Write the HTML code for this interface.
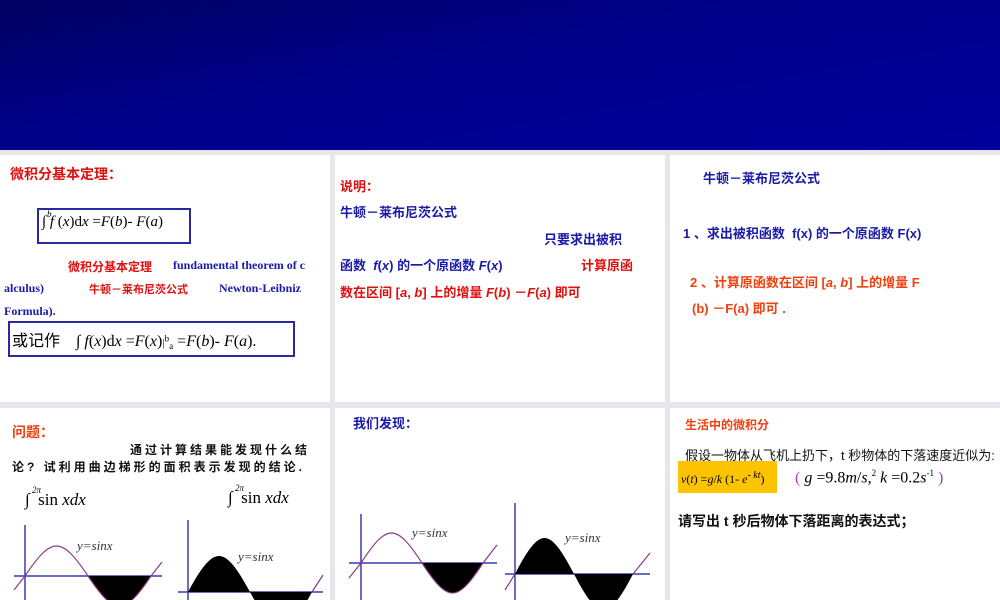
<!DOCTYPE html>
<html><head><meta charset="utf-8"><style>
*{margin:0;padding:0}
body{width:1000px;height:600px;position:relative;overflow:hidden;background:#e6e6ec;font-family:"Liberation Sans","Noto Sans CJK SC",sans-serif}
.hd{position:absolute;left:0;top:0;width:1000px;height:150px;background:linear-gradient(170deg,#000060 0%,#000088 40%,#00009c 100%)}
.p{position:absolute;background:#fff}
.t{position:absolute;white-space:nowrap;font-weight:bold;font-size:13px}
.r{color:#e01010}.b{color:#1a1aa8}.o{color:#f04010}.k{color:#111}
.ser{font-family:"Liberation Serif",serif;font-weight:normal;color:#000}
.box{position:absolute;border:2px solid #2a2aa0;background:#fff}
.lim{position:absolute;font-family:"Liberation Serif",serif;font-style:italic;font-size:9px;color:#000}
</style></head><body>
<div class="hd"></div>
<div class="p" style="left:0;top:155px;width:330px;height:247px"></div>
<div class="p" style="left:335px;top:155px;width:330px;height:247px"></div>
<div class="p" style="left:670px;top:155px;width:330px;height:247px"></div>
<div class="p" style="left:0;top:408px;width:330px;height:192px"></div>
<div class="p" style="left:335px;top:408px;width:330px;height:192px"></div>
<div class="p" style="left:670px;top:408px;width:330px;height:192px"></div>

<!-- panel 1 -->
<div class="t r" style="left:10px;top:164px;font-size:14px">微积分基本定理：</div>
<div class="box" style="left:37px;top:208px;width:150px;height:32px"></div>
<div class="t ser" style="left:42px;top:214px;font-size:15px"><i>∫</i> <i>f</i> (<i>x</i>)d<i>x</i> =<i>F</i>(<i>b</i>)- <i>F</i>(<i>a</i>)</div>
<div class="lim" style="left:47px;top:209px">b</div>
<div class="t r" style="left:68px;top:258px;font-size:12px">微积分基本定理</div>
<div class="t b ser" style="left:173px;top:258px;font-size:12px;color:#1a1aa8;font-weight:bold">fundamental theorem of c</div>
<div class="t b ser" style="left:4px;top:281px;font-size:12px;color:#1a1aa8;font-weight:bold">alculus)</div>
<div class="t r" style="left:89px;top:281px;font-size:11px">牛顿－莱布尼茨公式</div>
<div class="t b ser" style="left:219px;top:281px;font-size:12px;color:#1a1aa8;font-weight:bold">Newton-Leibniz</div>
<div class="t b ser" style="left:4px;top:304px;font-size:12px;color:#1a1aa8;font-weight:bold">Formula).</div>
<div class="box" style="left:8px;top:321px;width:283px;height:32px"></div>
<div class="t ser" style="left:12px;top:327px;font-size:16px">或记作 &nbsp;&nbsp; <i>∫</i> <i>f</i>(<i>x</i>)d<i>x</i> =<i>F</i>(<i>x</i>)<span style="font-size:11px">|<sup>b</sup><sub>a</sub></span> =<i>F</i>(<i>b</i>)- <i>F</i>(<i>a</i>).</div>

<!-- panel 2 -->
<div class="t r" style="left:340px;top:176px;font-size:13px">说明：</div>
<div class="t b" style="left:340px;top:202px">牛顿－莱布尼茨公式</div>
<div class="t b" style="left:544px;top:229px">只要求出被积</div>
<div class="t b" style="left:340px;top:255px">函数 &nbsp;<i>f</i>(<i>x</i>) 的一个原函数 <i>F</i>(<i>x</i>)</div>
<div class="t r" style="left:581px;top:255px">计算原函</div>
<div class="t r" style="left:340px;top:282px">数在区间 [<i>a</i>, <i>b</i>] 上的增量 <i>F</i>(<i>b</i>) －<i>F</i>(<i>a</i>) 即可</div>

<!-- panel 3 -->
<div class="t b" style="left:703px;top:168px">牛顿－莱布尼茨公式</div>
<div class="t b" style="left:683px;top:223px">1 、求出被积函数 &nbsp;f(x) 的一个原函数 F(x)</div>
<div class="t o" style="left:690px;top:272px">2 、计算原函数在区间 [<i>a</i>, <i>b</i>] 上的增量 F</div>
<div class="t o" style="left:692px;top:298px">(b) －F(a) 即可 .</div>

<!-- bottom 1 -->
<div class="t o" style="left:12px;top:422px;font-size:14px">问题：</div>
<div class="t k" style="left:130px;top:441px;font-size:12px;letter-spacing:3px">通过计算结果能发现什么结</div>
<div class="t k" style="left:12px;top:458px;font-size:12px;letter-spacing:3px">论? 试利用曲边梯形的面积表示发现的结论.</div>
<div class="t ser" style="left:25px;top:490px;font-size:17px"><i>∫</i> &nbsp;sin <i>xdx</i></div>
<div class="lim" style="left:32px;top:485px">2π</div>
<div class="t ser" style="left:228px;top:488px;font-size:17px"><i>∫</i> &nbsp;sin <i>xdx</i></div>
<div class="lim" style="left:235px;top:483px">2π</div>

<!-- bottom 2 -->
<div class="t b" style="left:353px;top:413px">我们发现：</div>

<!-- bottom 3 -->
<div class="t o" style="left:685px;top:416px;font-size:12px">生活中的微积分</div>
<div class="t k" style="left:685px;top:445px;font-weight:normal;font-size:13px">假设一物体从飞机上扔下，t 秒物体的下落速度近似为:</div>
<div style="position:absolute;left:678px;top:461px;width:99px;height:32px;background:#fcc400"></div>
<div class="t ser" style="left:681px;top:470px;font-size:12px"><i>v</i>(<i>t</i>) =<i>g</i>/<i>k</i> (1- <i>e</i><sup>- <i>kt</i></sup>)</div>
<div class="t ser" style="left:795px;top:468px;font-size:16px"><span style="color:#a040c0">(</span> <i>g</i> =9.8<i>m</i>/<i>s</i>,<sup style="font-size:9px">2</sup> <i>k</i> =0.2<i>s</i><sup style="font-size:9px">-1</sup> <span style="color:#a040c0">)</span></div>
<div class="t k" style="left:678px;top:511px;font-size:14px">请写出 t 秒后物体下落距离的表达式；</div>

<svg width="1000" height="600" style="position:absolute;left:0;top:0">
<g fill="none" stroke="#3a3ab0" stroke-width="1.5">
<line x1="14" y1="576" x2="162" y2="576"/><line x1="25" y1="525" x2="25" y2="600"/>
<line x1="178" y1="592" x2="323" y2="592"/><line x1="188" y1="520" x2="188" y2="600"/>
<line x1="349" y1="563" x2="497" y2="563"/><line x1="361" y1="514" x2="361" y2="600"/>
<line x1="505" y1="574" x2="650" y2="574"/><line x1="515" y1="503" x2="515" y2="600"/>
</g>
<path d="M88,576 C114.7,616 124.3,616 151,576Z" fill="#000"/>
<path d="M14,590 L25,576 C51.7,536 61.3,536 88,576 C114.7,616 124.3,616 151,576 L162,562" fill="none" stroke="#8a3a8a" stroke-width="1.2"/>
<path d="M188,592 C214,544 224,544 250,592 C276,640 286,640 312,592Z" fill="#000"/>
<path d="M312,592 L323,575" stroke="#8a3a8a" fill="none" stroke-width="1.2"/>
<path d="M422,563 C448,603 457,603 483,563Z" fill="#000"/>
<path d="M349,578 L361,563 C387,523 396,523 422,563 C448,603 457,603 483,563 L497,545" fill="none" stroke="#8a3a8a" stroke-width="1.2"/>
<path d="M515,574 C540,526 549,526 574,574 C599,622 608,622 633,574Z" fill="#000"/>
<path d="M505,590 L515,574 M633,574 L650,553" stroke="#8a3a8a" fill="none" stroke-width="1.2"/>
<g font-family="Liberation Serif,serif" font-style="italic" font-size="13" fill="#333">
<text x="77" y="550">y=sinx</text><text x="238" y="561">y=sinx</text>
<text x="412" y="537">y=sinx</text><text x="565" y="542">y=sinx</text>
</g>
</svg>
</body></html>
